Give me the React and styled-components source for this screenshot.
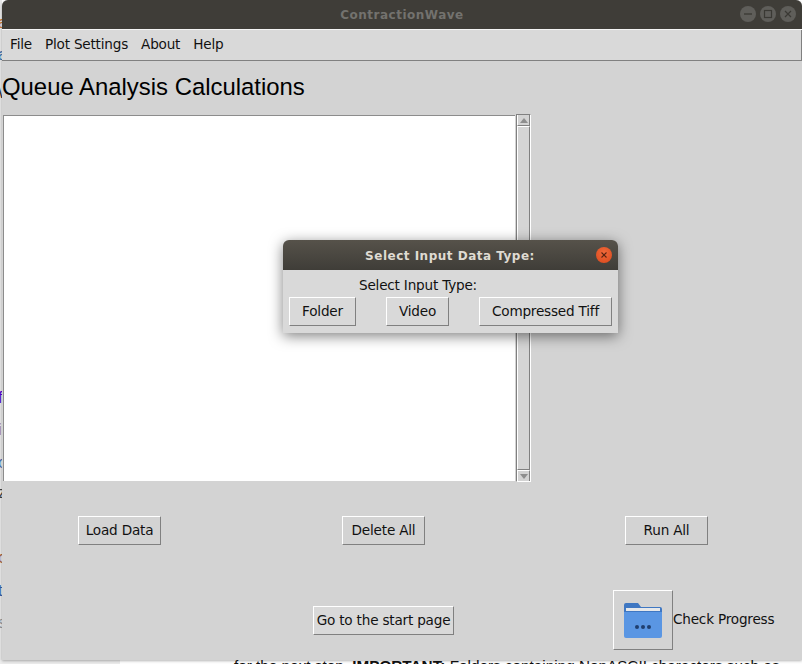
import React from "react";
import styled, { createGlobalStyle } from "styled-components";

const GlobalStyle = createGlobalStyle`
  html, body {
    margin: 0;
    padding: 0;
    background: #ffffff;
  }
`;

const Desktop = styled.div`
  position: relative;
  width: 802px;
  height: 664px;
  overflow: hidden;
  background: #ffffff;
  font-family: "DejaVu Sans", sans-serif;
`;

// bits of the page that sits behind the app window
const BehindEdge = styled.div`
  position: absolute;
  left: 0;
  top: 0;
  width: 2px;
  height: 664px;
  background: #e8e8e8;
  overflow: hidden;
`;

const BehindLetter = styled.span`
  position: absolute;
  left: -2px;
  top: ${(p) => p.$top}px;
  font: 16px "Liberation Sans", sans-serif;
  color: ${(p) => p.$color};
`;

const BehindStrip = styled.div`
  position: absolute;
  left: 0;
  bottom: 0;
  width: 120px;
  height: 4px;
  background: #ececec;
`;

const BehindText = styled.div`
  position: absolute;
  left: 234px;
  top: 657px;
  font: 15.3px "Liberation Sans", sans-serif;
  color: #111111;
  white-space: nowrap;

  b {
    font-weight: 700;
  }
`;

const AppWindow = styled.div`
  position: absolute;
  left: 2px;
  top: 0;
  width: 800px;
  height: 660px;
  display: flex;
  flex-direction: column;
  background: #d3d3d3;
  border-radius: 6px 6px 0 0;
  overflow: hidden;
  box-shadow: 0 1px 3px rgba(0, 0, 0, 0.3);
`;

const TitleBar = styled.div`
  position: relative;
  flex: none;
  height: 29px;
  display: flex;
  align-items: center;
  justify-content: center;
  background: #3f3d38;
  border-bottom: 1px solid #f4f4f4;
  font-size: 12px;
  font-weight: 700;
  letter-spacing: 0.5px;
  color: #73726e;
`;

const WindowControls = styled.div`
  position: absolute;
  right: 6px;
  top: 6px;
  display: flex;
  gap: 4px;
`;

const ControlDot = styled.div`
  width: 16px;
  height: 16px;
  border-radius: 50%;
  background: #5f5e5a;
  display: flex;
  align-items: center;
  justify-content: center;
`;

const MenuBar = styled.div`
  flex: none;
  height: 31px;
  box-sizing: border-box;
  display: flex;
  align-items: center;
  gap: 13px;
  padding: 0 0 3px 8px;
  background: #d9d9d9;
  border-bottom: 1px solid #808080;
  border-right: 1px solid #808080;
  font-size: 13.6px;
  letter-spacing: -0.2px;
  color: #111111;
`;

const Content = styled.div`
  flex: 1;
  display: flex;
  flex-direction: column;
  min-height: 0;
`;

const Heading = styled.h1`
  margin: 0;
  padding: 11px 0 0 0;
  height: 43px;
  box-sizing: content-box;
  font: 400 23.9px/30px "Liberation Sans", sans-serif;
  color: #000000;
`;

const ListRow = styled.div`
  display: flex;
  align-items: flex-start;
  padding-left: 1px;
`;

const ListBox = styled.div`
  width: 511px;
  height: 365px;
  background: #ffffff;
  border-top: 1px solid #8c8c8c;
  border-left: 1px solid #8c8c8c;
`;

const ScrollBar = styled.div`
  width: 15px;
  height: 368px;
  margin-top: -1px;
  margin-left: 1px;
  box-sizing: border-box;
  display: flex;
  flex-direction: column;
  background: #d3d3d3;
  border-top: 1px solid #808080;
  border-left: 1px solid #808080;
  border-right: 1px solid #ffffff;
  border-bottom: 1px solid #ffffff;
`;

const ScrollArrow = styled.div`
  flex: none;
  height: 10px;
  display: flex;
  align-items: center;
  justify-content: center;
  background: #d3d3d3;
  border-top: ${(p) => (p.$down ? "1px solid #ffffff" : "none")};
  border-bottom: ${(p) => (p.$down ? "none" : "1px solid #808080")};
  border-right: 1px solid #808080;
  border-left: 1px solid #ffffff;
`;

const ArrowGlyph = styled.div`
  width: 0;
  height: 0;
  border-left: 4px solid transparent;
  border-right: 4px solid transparent;
  ${(p) =>
    p.$down ? "border-top: 5px solid #8e8e8e;" : "border-bottom: 5px solid #8e8e8e;"}
`;

const ScrollThumb = styled.div`
  flex: 1;
  background: #d5d5d5;
  border-top: 1px solid #ffffff;
  border-left: 1px solid #ffffff;
  border-right: 1px solid #808080;
  border-bottom: 1px solid #808080;
`;

const ActionRow = styled.div`
  display: grid;
  grid-template-columns: 264px 283px auto;
  justify-content: start;
  padding: 34px 0 0 76px;
`;

const FooterRow = styled.div`
  display: flex;
  align-items: center;
  padding: 45px 0 0 311px;
`;

const Button = styled.button`
  box-sizing: border-box;
  width: ${(p) => p.$width}px;
  height: ${(p) => p.$height || 29}px;
  padding: 0 0 1px;
  margin: 0;
  background: ${(p) => (p.$raised ? "#d9d9d9" : "#d3d3d3")};
  border-style: solid;
  border-width: 1px;
  border-color: #ffffff #808080 #808080 #ffffff;
  font-family: "DejaVu Sans", sans-serif;
  font-size: 13.6px;
  letter-spacing: -0.2px;
  color: #111111;
  white-space: nowrap;
`;

const ProgressButton = styled(Button)`
  width: 60px;
  height: 60px;
  margin-left: 159px;
  display: flex;
  align-items: center;
  justify-content: center;
`;

const ProgressLabel = styled.span`
  padding-bottom: 2px;
  font-size: 13.6px;
  letter-spacing: -0.2px;
  color: #111111;
`;

const Dialog = styled.div`
  position: absolute;
  left: 283px;
  top: 240px;
  width: 335px;
  height: 93px;
  display: flex;
  flex-direction: column;
  background: #d9d9d9;
  border-radius: 6px 6px 0 0;
  overflow: hidden;
`;

const DialogShadow = styled.div`
  position: absolute;
  left: 283px;
  top: 240px;
  width: 335px;
  height: 93px;
  border-radius: 6px 6px 0 0;
  box-shadow: 0 3px 14px rgba(0, 0, 0, 0.5);
`;

const DialogTitle = styled.div`
  position: relative;
  flex: none;
  height: 30px;
  box-sizing: border-box;
  display: flex;
  align-items: center;
  justify-content: center;
  padding: 1px 1px 0 0;
  background: linear-gradient(#56524a, #3f3d38);
  font-size: 12px;
  font-weight: 700;
  letter-spacing: 0.5px;
  color: #dfdbd2;
`;

const CloseDot = styled.div`
  position: absolute;
  right: 6px;
  top: 7px;
  width: 16px;
  height: 16px;
  border-radius: 50%;
  background: radial-gradient(circle at 50% 35%, #f0693a, #d9481c);
  display: flex;
  align-items: center;
  justify-content: center;
`;

const DialogLabel = styled.div`
  height: 27px;
  line-height: 30px;
  padding-left: 76px;
  font-size: 13.6px;
  letter-spacing: -0.2px;
  color: #111111;
`;

const DialogButtons = styled.div`
  display: grid;
  grid-template-columns: 97px 93px auto;
  padding-left: 6px;
`;

const FolderIcon = () => (
  <svg width="38" height="36" viewBox="0 0 38 36">
    <path d="M0 3a2 2 0 0 1 2-2h12l3 4h19a2 2 0 0 1 2 2v6H0z" fill="#3f77c2" />
    <rect x="2" y="6" width="34" height="6" fill="#e6e8ea" />
    <path d="M0 10h38v24a2 2 0 0 1-2 2H2a2 2 0 0 1-2-2z" fill="#5a96e3" />
    <rect x="0" y="9" width="38" height="1" fill="#3f77c2" />
    <circle cx="13" cy="25" r="2" fill="#1f3f70" />
    <circle cx="19" cy="25" r="2" fill="#1f3f70" />
    <circle cx="25" cy="25" r="2" fill="#1f3f70" />
  </svg>
);

const App = () => {
  return (
    <Desktop>
      <GlobalStyle />
      <BehindEdge>
        <BehindLetter $top={14} $color="#c8762a">a</BehindLetter>
        <BehindLetter $top={46} $color="#3b6ea8">a</BehindLetter>
        <BehindLetter $top={84} $color="#222222">\</BehindLetter>
        <BehindLetter $top={389} $color="#5a00d0">f</BehindLetter>
        <BehindLetter $top={421} $color="#a5623a">i</BehindLetter>
        <BehindLetter $top={454} $color="#4a6fb0">o</BehindLetter>
        <BehindLetter $top={484} $color="#444444">z</BehindLetter>
        <BehindLetter $top={549} $color="#a5623a">c</BehindLetter>
        <BehindLetter $top={582} $color="#3a5fa0">t</BehindLetter>
        <BehindLetter $top={614} $color="#999999">s</BehindLetter>
      </BehindEdge>
      <BehindStrip />
      <BehindText>
        for the next step. <b>IMPORTANT:</b> Folders containing NonASCII characters such as
      </BehindText>

      <AppWindow>
        <TitleBar>
          ContractionWave
          <WindowControls>
            <ControlDot>
              <svg width="10" height="10" viewBox="0 0 10 10">
                <path d="M1 5h8" stroke="#3a3934" strokeWidth="1.3" />
              </svg>
            </ControlDot>
            <ControlDot>
              <svg width="10" height="10" viewBox="0 0 10 10">
                <rect x="1.5" y="1.5" width="7" height="7" fill="none" stroke="#3a3934" strokeWidth="1.2" />
              </svg>
            </ControlDot>
            <ControlDot>
              <svg width="10" height="10" viewBox="0 0 10 10">
                <path d="M2 2l6 6M8 2l-6 6" stroke="#3a3934" strokeWidth="1.2" />
              </svg>
            </ControlDot>
          </WindowControls>
        </TitleBar>
        <MenuBar>
          <span>File</span>
          <span>Plot Settings</span>
          <span>About</span>
          <span>Help</span>
        </MenuBar>
        <Content>
          <Heading>Queue Analysis Calculations</Heading>
          <ListRow>
            <ListBox />
            <ScrollBar>
              <ScrollArrow>
                <ArrowGlyph />
              </ScrollArrow>
              <ScrollThumb />
              <ScrollArrow $down>
                <ArrowGlyph $down />
              </ScrollArrow>
            </ScrollBar>
          </ListRow>
          <ActionRow>
            <Button $width={83}>Load Data</Button>
            <Button $width={83}>Delete All</Button>
            <Button $width={83}>Run All</Button>
          </ActionRow>
          <FooterRow>
            <Button $width={141} $raised>Go to the start page</Button>
            <ProgressButton>
              <FolderIcon />
            </ProgressButton>
            <ProgressLabel>Check Progress</ProgressLabel>
          </FooterRow>
        </Content>
      </AppWindow>

      <DialogShadow />
      <Dialog>
        <DialogTitle>
          Select Input Data Type:
          <CloseDot>
            <svg width="8" height="8" viewBox="0 0 8 8">
              <path d="M1.5 1.5l5 5M6.5 1.5l-5 5" stroke="#5a2412" strokeWidth="1.1" />
            </svg>
          </CloseDot>
        </DialogTitle>
        <DialogLabel>Select Input Type:</DialogLabel>
        <DialogButtons>
          <Button $width={67} $raised>Folder</Button>
          <Button $width={63} $raised>Video</Button>
          <Button $width={133} $raised>Compressed Tiff</Button>
        </DialogButtons>
      </Dialog>
    </Desktop>
  );
};

export default App;
